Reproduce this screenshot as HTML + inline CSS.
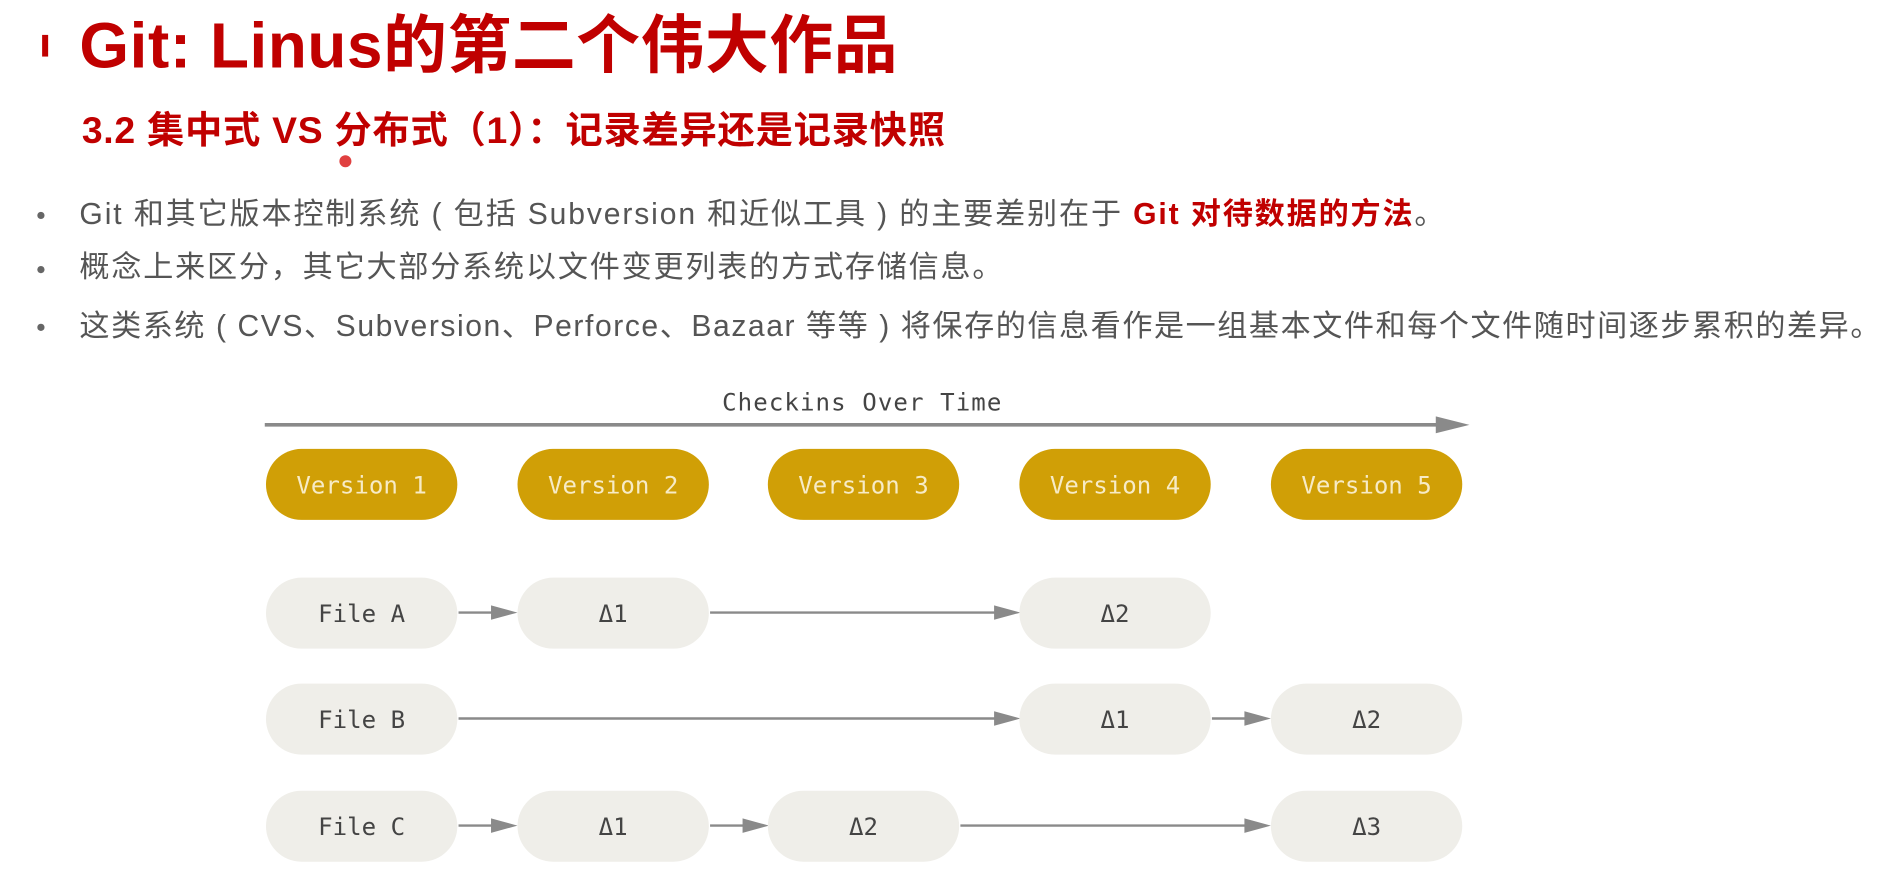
<!DOCTYPE html>
<html><head><meta charset="utf-8"><style>
html,body{margin:0;padding:0;background:#fff;width:1887px;height:875px;overflow:hidden}
#w{position:absolute;left:0;top:0;width:1568px;height:727px;transform:scale(1.2035);transform-origin:0 0}
.a{position:absolute;white-space:nowrap}
.cjk{font-family:"Liberation Sans","Noto Sans CJK SC",sans-serif}
.t{color:#c00000;font-weight:bold}
.b{color:#555;font-size:25px;font-family:"Liberation Sans","Noto Sans CJK SC",sans-serif}
.dot{position:absolute;width:6px;height:6px;border-radius:50%;background:#666}
.pill{position:absolute;width:159px;height:59px;border-radius:30px;display:flex;align-items:center;justify-content:center;font-family:"DejaVu Sans Mono","Liberation Mono",monospace;font-size:20px}
.v{background:#d09f06;color:#f7ebc6}
.f{background:#efeee9;color:#444}
</style></head><body><div id="w">
<div class="a" style="left:35px;top:29px;width:5px;height:18px;background:#c00000"></div>
<div class="a cjk t" style="left:66px;top:6px;font-size:53px;line-height:66px;letter-spacing:0.5px">Git: Linus的第二个伟大作品</div>
<div class="a cjk t" style="left:68px;top:89px;font-size:31px;line-height:40px;letter-spacing:0.6px">3.2 集中式 VS 分布式（1）：记录差异还是记录快照</div>
<div class="a" style="left:282px;top:129px;width:10px;height:10px;border-radius:50%;background:#e04040"></div>
<div class="dot" style="left:31px;top:176px"></div>
<div class="a b" style="left:66px;top:162px;line-height:32px;letter-spacing:1.55px">Git 和其它版本控制系统 ( 包括 Subversion 和近似工具 ) 的主要差别在于 <span style="color:#c00000;font-weight:bold">Git 对待数据的方法</span>。</div>
<div class="dot" style="left:31px;top:221px"></div>
<div class="a b" style="left:66px;top:206px;line-height:32px;letter-spacing:1.5px">概念上来区分，其它大部分系统以文件变更列表的方式存储信息。</div>
<div class="dot" style="left:31px;top:269px"></div>
<div class="a b" style="left:66px;top:255px;line-height:32px;letter-spacing:1.3px">这类系统 ( CVS、Subversion、Perforce、Bazaar 等等 ) 将保存的信息看作是一组基本文件和每个文件随时间逐步累积的差异。</div>
<div class="a" style="left:600px;top:322px;font-family:'DejaVu Sans Mono',monospace;font-size:20px;color:#444;letter-spacing:0.9px">Checkins Over Time</div>
<svg class="a" style="left:0;top:0" width="1568" height="727">
<g fill="#8a8a8a" stroke="#8a8a8a">
<line x1="220" y1="353" x2="1196" y2="353" stroke-width="3"/><polygon points="1193,346 1221,353 1193,360" stroke="none"/>
<line x1="381" y1="509" x2="412" y2="509" stroke-width="2"/><polygon points="408,503 430,509 408,515" stroke="none"/>
<line x1="590" y1="509" x2="830" y2="509" stroke-width="2"/><polygon points="826,503 848,509 826,515" stroke="none"/>
<line x1="381" y1="597" x2="830" y2="597" stroke-width="2"/><polygon points="826,591 848,597 826,603" stroke="none"/>
<line x1="1007" y1="597" x2="1038" y2="597" stroke-width="2"/><polygon points="1034,591 1056,597 1034,603" stroke="none"/>
<line x1="381" y1="686" x2="412" y2="686" stroke-width="2"/><polygon points="408,680 430,686 408,692" stroke="none"/>
<line x1="590" y1="686" x2="621" y2="686" stroke-width="2"/><polygon points="617,680 639,686 617,692" stroke="none"/>
<line x1="798" y1="686" x2="1038" y2="686" stroke-width="2"/><polygon points="1034,680 1056,686 1034,692" stroke="none"/>
</g></svg>
<div class="pill v" style="left:221px;top:373px">Version 1</div>
<div class="pill v" style="left:430px;top:373px">Version 2</div>
<div class="pill v" style="left:638px;top:373px">Version 3</div>
<div class="pill v" style="left:847px;top:373px">Version 4</div>
<div class="pill v" style="left:1056px;top:373px">Version 5</div>
<div class="pill f" style="left:221px;top:480px">File A</div>
<div class="pill f" style="left:430px;top:480px">Δ1</div>
<div class="pill f" style="left:847px;top:480px">Δ2</div>
<div class="pill f" style="left:221px;top:568px">File B</div>
<div class="pill f" style="left:847px;top:568px">Δ1</div>
<div class="pill f" style="left:1056px;top:568px">Δ2</div>
<div class="pill f" style="left:221px;top:657px">File C</div>
<div class="pill f" style="left:430px;top:657px">Δ1</div>
<div class="pill f" style="left:638px;top:657px">Δ2</div>
<div class="pill f" style="left:1056px;top:657px">Δ3</div>
</div></body></html>
